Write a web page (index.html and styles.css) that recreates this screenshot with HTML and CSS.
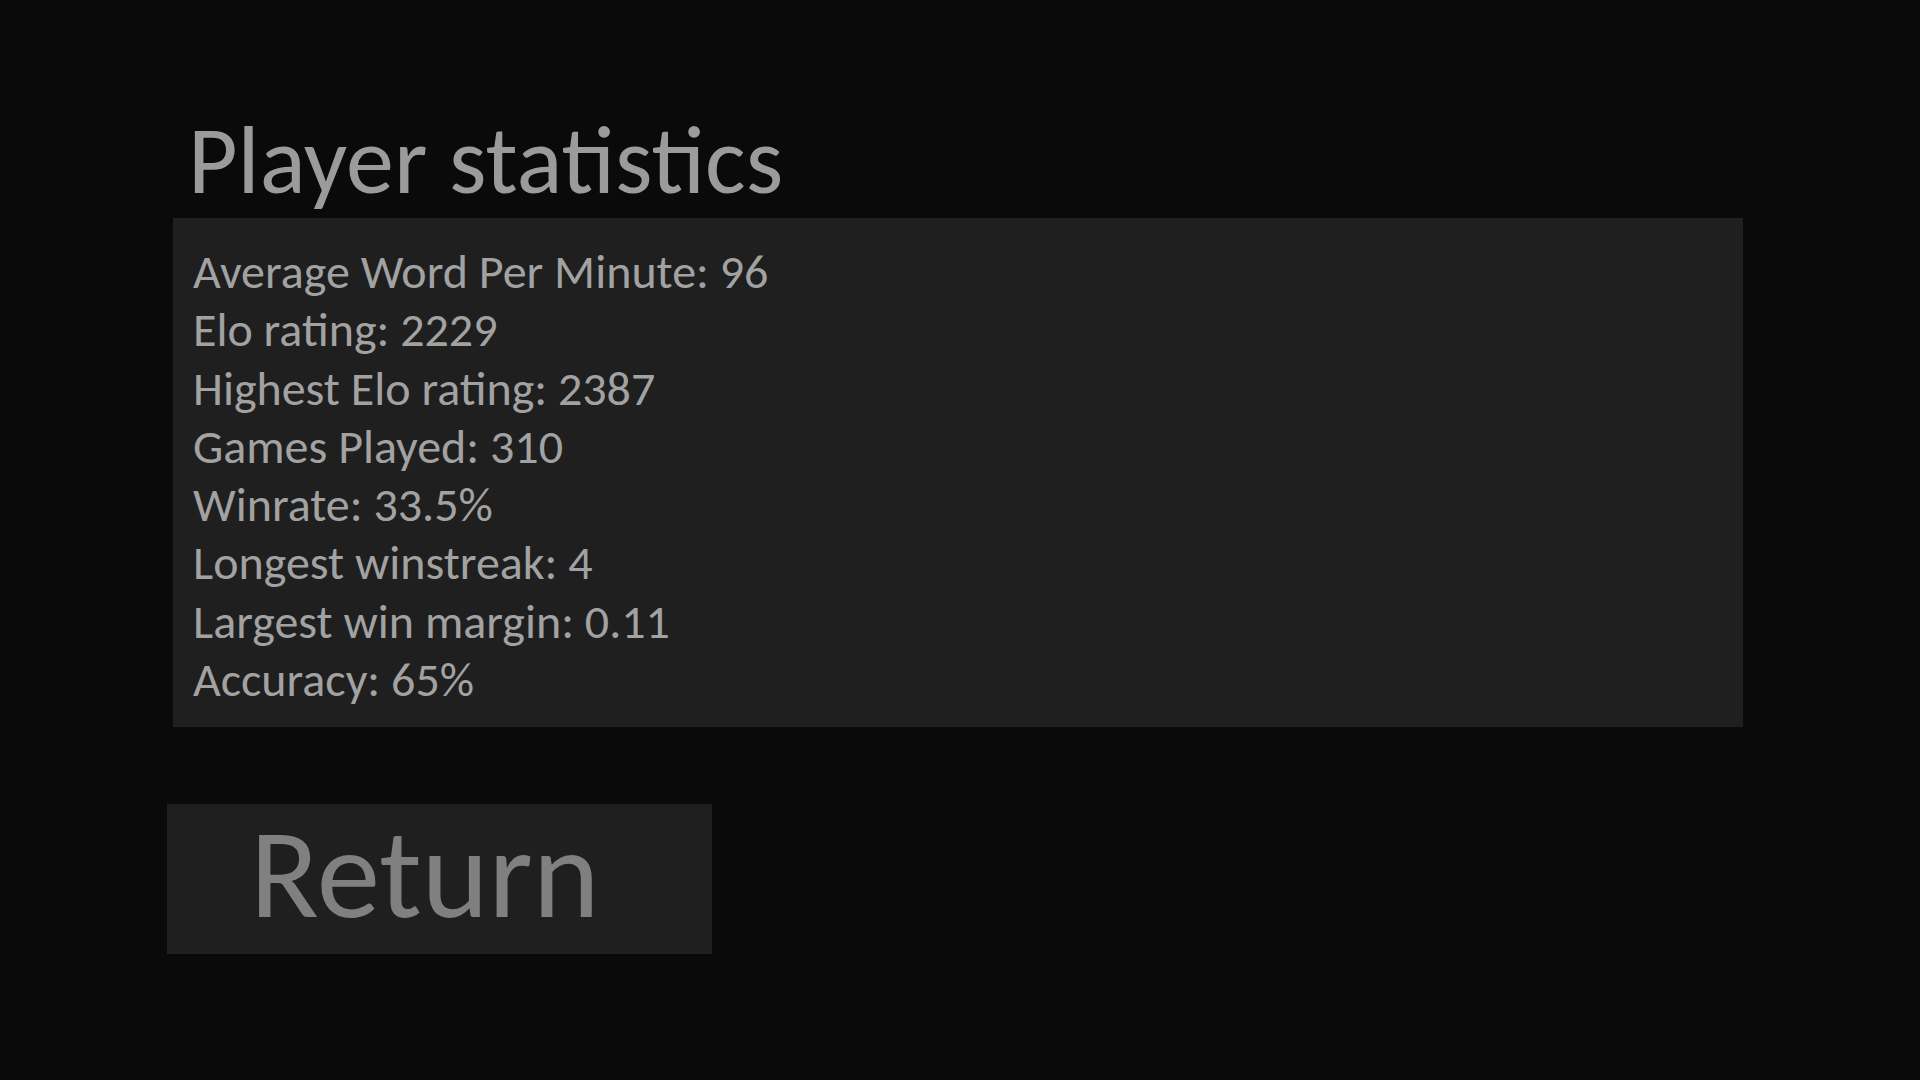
FILE: index.html
```html
<!DOCTYPE html>
<html lang="en">
<head>
<meta charset="utf-8">
<title>Player statistics</title>
<link rel="stylesheet" href="styles.css">
</head>
<body>
<main class="page">
  <h1 class="title">Player statistics</h1>
  <section class="stats">
    <p class="stat">Average Word Per Minute: 96</p>
    <p class="stat">Elo rating: 2229</p>
    <p class="stat">Highest Elo rating: 2387</p>
    <p class="stat">Games Played: 310</p>
    <p class="stat">Winrate: 33.5%</p>
    <p class="stat">Longest winstreak: 4</p>
    <p class="stat">Largest win margin: 0.11</p>
    <p class="stat">Accuracy: 65%</p>
  </section>
  <button class="return-btn" type="button">Return</button>
</main>
</body>
</html>
```
FILE: styles.css
```css
html, body {
  margin: 0;
  padding: 0;
  background: #0a0a0a;
  height: 100%;
}
.page {
  box-sizing: border-box;
  width: 1920px;
  height: 1080px;
  padding: 104px 0 0 167px;
  display: flex;
  flex-direction: column;
  align-items: flex-start;
  font-family: Calibri, Carlito, Lato, "Open Sans", sans-serif;
}
.title {
  margin: 0 0 0 21px;
  font-weight: 400;
  font-size: 96px;
  line-height: 114px;
  color: #9b9b9b;
}
.stats {
  margin: 0 0 0 6px;
  width: 1570px;
  box-sizing: border-box;
  height: 509px;
  background: #1f1f1f;
  padding: 25px 0 0 20px;
  display: flex;
  flex-direction: column;
}
.stat {
  margin: 0;
  font-size: 48px;
  line-height: 58.3px;
  color: #a2a2a2;
}
.return-btn {
  margin-top: 77px;
  width: 545px;
  height: 150px;
  box-sizing: border-box;
  border: 0;
  padding: 0 0 10px 83px;
  background: #1f1f1f;
  color: #808080;
  font-family: inherit;
  font-size: 127px;
  text-align: left;
  line-height: 140px;
}
```
